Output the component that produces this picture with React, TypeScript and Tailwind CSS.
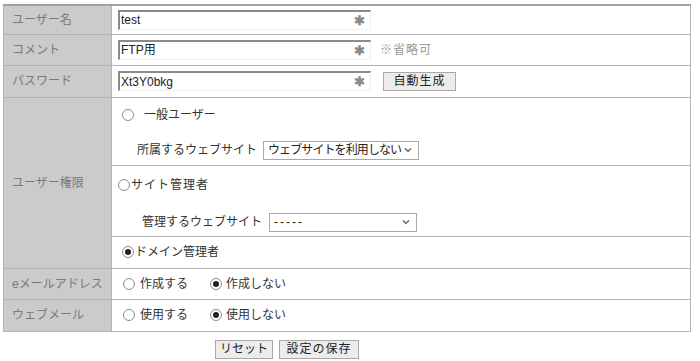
import React from 'react';

const font = { fontFamily: '"Liberation Sans", "Noto Sans CJK JP", sans-serif' };

function Radio({ checked }: { checked?: boolean }) {
  return (
    <span className="inline-flex items-center justify-center w-[12px] h-[12px] rounded-full border border-[#8c8c8c] bg-white align-middle shrink-0">
      {checked && <span className="w-[6px] h-[6px] rounded-full bg-[#222]" />}
    </span>
  );
}

function TextBox({ value }: { value: string }) {
  return (
    <div className="relative w-[253px] h-[20px] bg-white border-t-2 border-l-2 border-t-[#8a8a8a] border-l-[#8a8a8a] border-b border-r border-b-[#eee] border-r-[#eee] flex items-center pl-[1px]">
      <span className="text-[12px] text-[#222]">{value}</span>
      <span className="absolute right-[5px] top-[0px] text-[13px] leading-[18px] text-[#8a8a8a] font-bold">✱</span>
    </div>
  );
}

function Select({ label, width, textCls = '' }: { label: string; width: string; textCls?: string }) {
  return (
    <div className={`${width} h-[19px] border border-[#a8a8a8] bg-white flex items-center justify-between px-[4px] text-[12px] text-[#222] whitespace-nowrap shrink-0`}>
      <span className={textCls}>{label}</span>
      <svg width="8" height="6" viewBox="0 0 8 6" className="mr-[2px] shrink-0">
        <path d="M1 1.5 L4 4.5 L7 1.5" fill="none" stroke="#555" strokeWidth="1.2" />
      </svg>
    </div>
  );
}

function Button({ children, className = '' }: { children: React.ReactNode; className?: string }) {
  return (
    <button className={`h-[19px] border border-[#a8a8a8] bg-[#ececec] text-[12px] text-[#222] leading-none ${className}`}>
      {children}
    </button>
  );
}

const labelCls = 'w-[108px] bg-[#cbcbcb] text-[12px] text-[#7a7a7a] pl-[8px] align-middle border border-[#b4b4b4]';
const cellCls = 'bg-white border border-[#b4b4b4] pl-[6px] align-middle text-[12px] text-[#333]';

export default function App() {
  return (
    <div className="w-[700px] h-[361px] bg-white pt-[4px] pl-[3px]" style={font}>
      <table className="w-[688px] border-collapse border-t-2 border-t-[#a0a0a0]">
        <tbody>
          <tr className="h-[29px]">
            <td className={labelCls}>ユーザー名</td>
            <td className={cellCls}><TextBox value="test" /></td>
          </tr>
          <tr className="h-[31px]">
            <td className={labelCls}>コメント</td>
            <td className={cellCls}>
              <div className="flex items-center gap-[9px]">
                <TextBox value="FTP用" />
                <span className="text-[#999] tracking-[1px]">※省略可</span>
              </div>
            </td>
          </tr>
          <tr className="h-[32px]">
            <td className={labelCls}>パスワード</td>
            <td className={cellCls}>
              <div className="flex items-center gap-[12px]">
                <TextBox value="Xt3Y0bkg" />
                <Button className="w-[73px] tracking-[1px]">自動生成</Button>
              </div>
            </td>
          </tr>
          <tr className="h-[68px]">
            <td className={labelCls} rowSpan={3}>ユーザー権限</td>
            <td className={`${cellCls} align-top`}>
              <div className="flex flex-col">
                <div className="flex items-center gap-[10px] pl-[4px] pt-[8px] h-[26px]">
                  <Radio />
                  <span>一般ユーザー</span>
                </div>
                <div className="flex items-center gap-[6px] pl-[19px] mt-[17px]">
                  <span className="whitespace-nowrap">所属するウェブサイト</span>
                  <Select label="ウェブサイトを利用しない" width="w-[156px]" textCls="tracking-[-0.9px]" />
                </div>
              </div>
            </td>
          </tr>
          <tr className="h-[71px]">
            <td className={`${cellCls} align-top`}>
              <div className="flex flex-col">
                <div className="flex items-center gap-[1px] h-[28px] pt-[10px]">
                  <Radio />
                  <span className="tracking-[1px]">サイト管理者</span>
                </div>
                <div className="flex items-center gap-[7px] pl-[24px] mt-[19px]">
                  <span className="whitespace-nowrap">管理するウェブサイト</span>
                  <Select label="-----" width="w-[148px]" textCls="tracking-[2px]" />
                </div>
              </div>
            </td>
          </tr>
          <tr className="h-[32px]">
            <td className={cellCls}>
              <div className="flex items-center gap-[1px] pl-[4px]">
                <Radio checked />
                <span>ドメイン管理者</span>
              </div>
            </td>
          </tr>
          <tr className="h-[31px]">
            <td className={labelCls}>eメールアドレス</td>
            <td className={cellCls}>
              <div className="flex items-center pl-[5px]">
                <Radio />
                <span className="ml-[5px]">作成する</span>
                <span className="ml-[22px] flex"><Radio checked /></span>
                <span className="ml-[4px]">作成しない</span>
              </div>
            </td>
          </tr>
          <tr className="h-[32px]">
            <td className={labelCls}>ウェブメール</td>
            <td className={cellCls}>
              <div className="flex items-center pl-[5px]">
                <Radio />
                <span className="ml-[5px]">使用する</span>
                <span className="ml-[22px] flex"><Radio checked /></span>
                <span className="ml-[4px]">使用しない</span>
              </div>
            </td>
          </tr>
        </tbody>
      </table>
      <div className="flex gap-[6px] mt-[8px] pl-[212px]">
        <Button className="w-[58px]">リセット</Button>
        <Button className="w-[80px] tracking-[1px]">設定の保存</Button>
      </div>
    </div>
  );
}
